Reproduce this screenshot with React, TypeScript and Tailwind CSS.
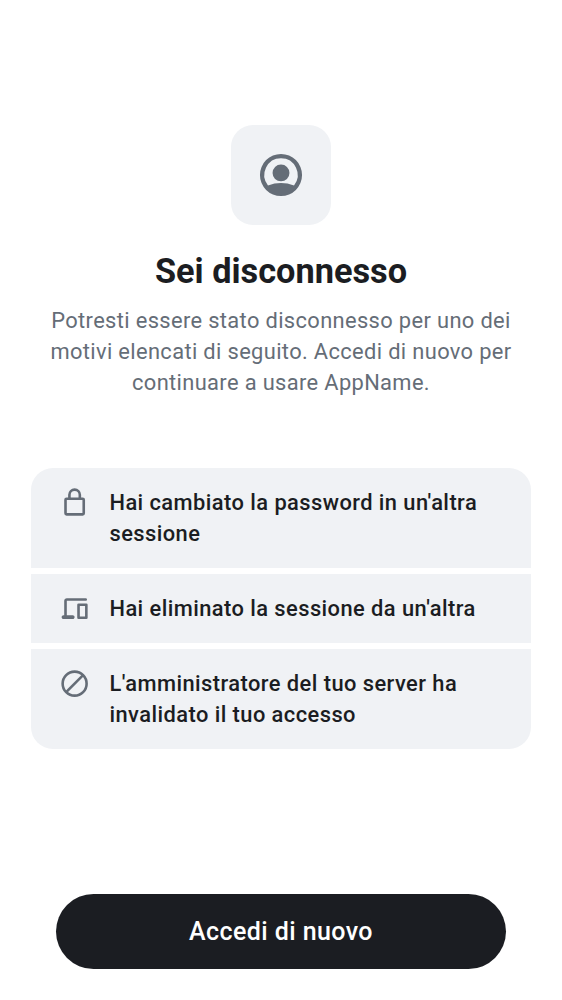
import React from "react";

type Reason = { icon: React.ReactNode; lines: string[]; shape: string };

const reasons: Reason[] = [
  {
    icon: (
      <g fill="none" strokeWidth="2">
        <rect x="5" y="9" width="14" height="12" rx=".8" />
        <path d="M8 9V6a4 4 0 0 1 8 0v3" />
      </g>
    ),
    lines: ["Hai cambiato la password in un'altra", "sessione"],
    shape: "h-[100px] rounded-t-[22px]",
  },
  {
    icon: (
      <g stroke="none">
        <path d="M4 17V6q0-.825.588-1.413Q5.175 4 6 4h14.500q.425 0 .712.287.288.288.288.713t-.288.713Q20.925 6 20.500 6H6v11h4.500q.625 0 1.063.438Q12 17.875 12 18.500t-.437 1.063Q11.125 20 10.500 20h-7q-.625 0-1.062-.437Q2 19.125 2 18.500t.438-1.062Q2.875 17 3.500 17Z" />
        <path fillRule="evenodd" d="M15 8h6q1 0 1 1v10q0 1-1 1h-6q-1 0-1-1V9q0-1 1-1Zm1 2v8h4v-8Z" />
      </g>
    ),
    lines: ["Hai eliminato la sessione da un'altra"],
    shape: "h-[68.750px]",
  },
  {
    icon: (
      <g fill="none" strokeWidth="2">
        <circle cx="12" cy="12" r="9.200" />
        <path d="m5.500 18.500 13-13" />
      </g>
    ),
    lines: ["L'amministratore del tuo server ha", "invalidato il tuo accesso"],
    shape: "h-[100px] rounded-b-[22px]",
  },
];

export default function App() {
  return (
    <main className="flex h-[1000px] w-[562px] flex-col items-center bg-white pt-[125px] font-['Roboto',sans-serif] text-[#1b1d22]">
      <div className="flex size-[100px] items-center justify-center rounded-[22px] bg-[#f0f2f5]">
        <svg viewBox="0 0 24 24" className="size-[50px] fill-[#656d77]">
          <path fillRule="evenodd" d="M12 1.900a10.100 10.100 0 1 0 0 20.200 10.100 10.100 0 0 0 0-20.200ZM12 4a8 8 0 0 1 6.250 13Q12 14.700 5.750 17A8 8 0 0 1 12 4Z" />
          <circle cx="12" cy="11" r="4.050" />
        </svg>
      </div>
      <h1 className="mt-[25px] h-[42px] text-[34.300px] font-bold leading-[42px]">Sei disconnesso</h1>
      <p className="mt-[12.600px] whitespace-nowrap text-center text-[21.875px] leading-[31.250px] tracking-[0.360px] text-[#656d77]">
        Potresti essere stato disconnesso per uno dei<br />
        motivi elencati di seguito. Accedi di nuovo per<br />
        continuare a usare AppName.
      </p>
      <ul className="mt-[69.400px] flex w-[500px] flex-col gap-[6.250px]">
        {reasons.map((reason) => (
          <li key={reason.lines[0]} className={`flex gap-[18.800px] bg-[#f0f2f5] pl-[28.400px] pt-[19px] ${reason.shape}`}>
            <svg viewBox="0 0 24 24" className="size-[31.250px] shrink-0 fill-[#656d77] stroke-[#656d77]">{reason.icon}</svg>
            <p className="whitespace-nowrap text-[21.875px] font-medium leading-[31.250px] tracking-[0.445px]">
              {reason.lines.map((line) => <span key={line} className="block">{line}</span>)}
            </p>
          </li>
        ))}
      </ul>
      <button className="mt-[144.750px] h-[75px] w-[450px] rounded-full bg-[#1b1d22] pt-[1px] text-[25px] font-medium tracking-[0.420px] text-white">Accedi di nuovo</button>
    </main>
  );
}
